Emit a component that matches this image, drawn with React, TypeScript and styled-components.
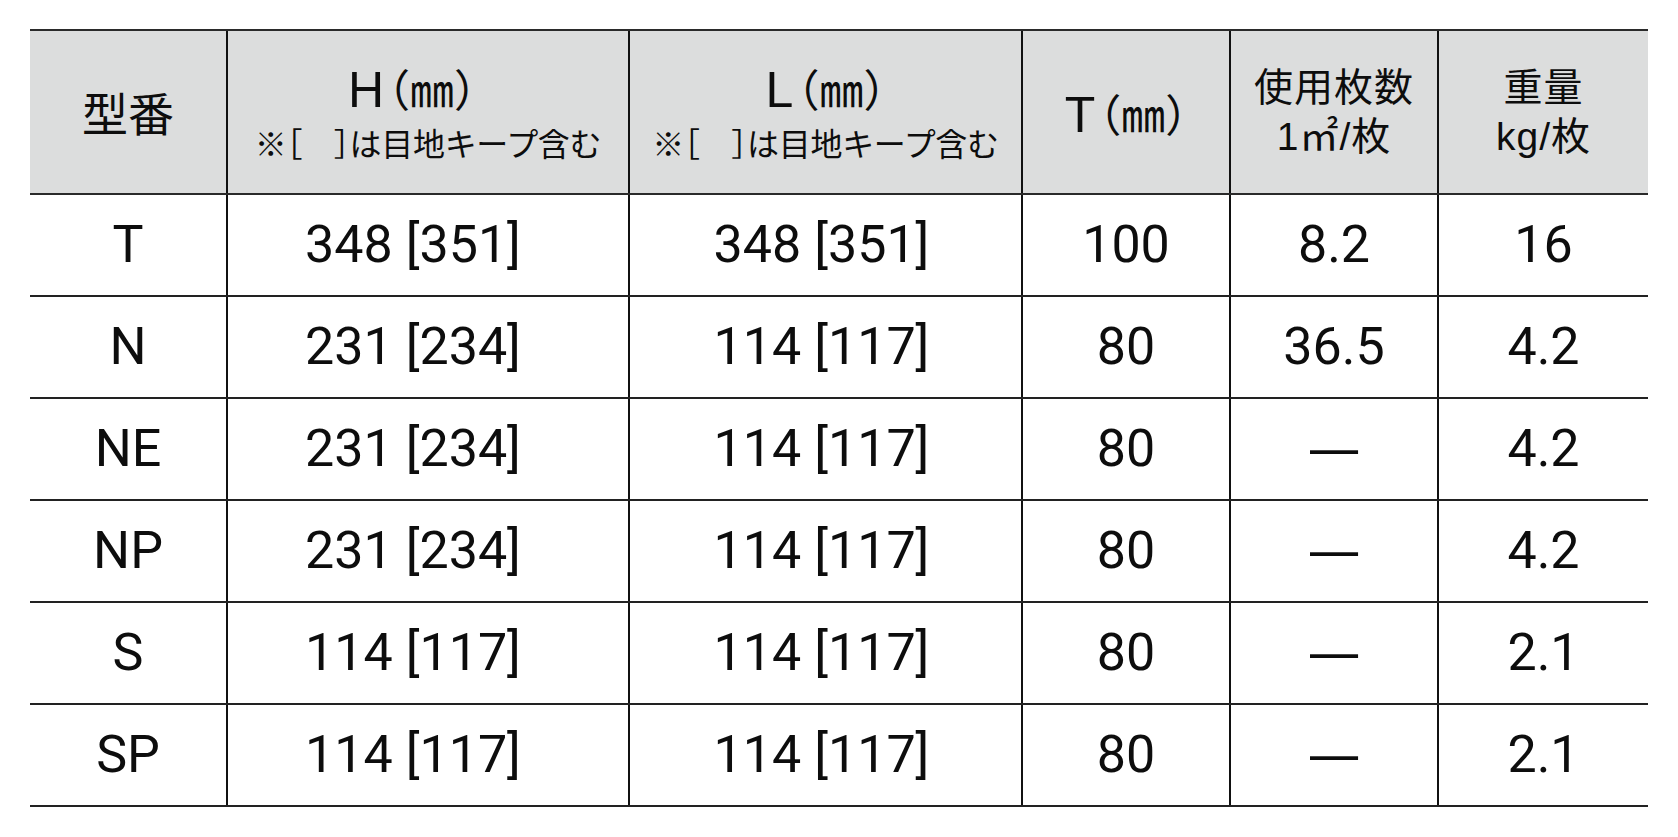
import React from "react";
import styled, { createGlobalStyle } from "styled-components";

const GlobalStyle = createGlobalStyle`
  html, body {
    margin: 0;
    padding: 0;
    background: #ffffff;
  }
`;

type Row = [string, string, string, string, string, string];

const COLUMNS = [197, 402, 393, 208, 208, 210];
// the H column sits a bit right-heavy in the source, so its values get pushed left
const RIGHT_PAD = [0, 30, 8, 0, 0, 0];

const ROWS: Row[] = [
  ["T", "348 [351]", "348 [351]", "100", "8.2", "16"],
  ["N", "231 [234]", "114 [117]", "80", "36.5", "4.2"],
  ["NE", "231 [234]", "114 [117]", "80", "—", "4.2"],
  ["NP", "231 [234]", "114 [117]", "80", "—", "4.2"],
  ["S", "114 [117]", "114 [117]", "80", "—", "2.1"],
  ["SP", "114 [117]", "114 [117]", "80", "—", "2.1"],
];

export default function App() {
  return (
    <Page>
      <GlobalStyle />
      <SpecTable>
        <colgroup>
          {COLUMNS.map((w, i) => (
            <col key={i} style={{ width: w }} />
          ))}
        </colgroup>
        <thead>
          <HeadRow>
            <HeadCell>
              <ModelLabel>型番</ModelLabel>
            </HeadCell>
            <HeadCell>
              <HeadMain $padRight={32}>
                H<Unit>（㎜）</Unit>
              </HeadMain>
              <HeadNote>※［　］は目地キープ含む</HeadNote>
            </HeadCell>
            <HeadCell>
              <HeadMain>
                L<Unit>（㎜）</Unit>
              </HeadMain>
              <HeadNote>※［　］は目地キープ含む</HeadNote>
            </HeadCell>
            <HeadCell>
              <HeadMain $single>
                T<Unit>（㎜）</Unit>
              </HeadMain>
            </HeadCell>
            <HeadCell>
              <HeadStack>使用枚数</HeadStack>
              <HeadStack>1㎡/枚</HeadStack>
            </HeadCell>
            <HeadCell>
              <HeadStack>重量</HeadStack>
              <HeadStack>kg/枚</HeadStack>
            </HeadCell>
          </HeadRow>
        </thead>
        <tbody>
          {ROWS.map((row) => (
            <BodyRow key={row[0]}>
              {row.map((value, i) => (
                <BodyCell key={i} $padRight={RIGHT_PAD[i]}>
                  {value === "—" ? <Dash>—</Dash> : value}
                </BodyCell>
              ))}
            </BodyRow>
          ))}
        </tbody>
      </SpecTable>
    </Page>
  );
}

const Page = styled.div`
  padding: 29px 30px 0 30px;
  width: 1678px;
  box-sizing: border-box;
`;

const SpecTable = styled.table`
  border-collapse: collapse;
  table-layout: fixed;
  width: 1618px;
  color: #0d0d0d;
`;

const HeadRow = styled.tr`
  height: 164px;
  background: #dcdddd;
`;

const HeadCell = styled.th`
  padding: 0;
  font-weight: 400;
  text-align: center;
  vertical-align: middle;
  border-top: 2px solid #2a2a2a;
  border-bottom: 2px solid #2a2a2a;
  border-left: 2px solid #111111;
  font-family: "Liberation Sans", "Noto Sans CJK JP", sans-serif;

  &:first-child {
    border-left: none;
  }
`;

const ModelLabel = styled.div`
  font-family: "Noto Sans CJK JP", sans-serif;
  font-size: 46px;
  line-height: 52px;
  margin-top: -2px;
`;

const HeadMain = styled.div<{ $single?: boolean; $padRight?: number }>`
  font-size: 50px;
  line-height: 54px;
  margin-top: ${(p) => (p.$single ? "4px" : "-2px")};
  padding-right: ${(p) => p.$padRight ?? 0}px;
`;

const Unit = styled.span`
  font-family: "Noto Sans CJK JP", sans-serif;
  font-size: 44px;
  font-feature-settings: "halt";
  margin-left: 4px;
`;

const HeadNote = styled.div`
  font-family: "Noto Sans CJK JP", sans-serif;
  font-size: 32px;
  line-height: 40px;
  margin-top: 5px;
  font-feature-settings: "halt";
  letter-spacing: -0.3px;
`;

const HeadStack = styled.div`
  font-family: "Liberation Sans", "Noto Sans CJK JP", sans-serif;
  font-size: 39px;
  line-height: 49px;
  letter-spacing: 1px;
`;

const BodyRow = styled.tr`
  height: 102px;
`;

const BodyCell = styled.td<{ $padRight: number }>`
  padding: 0 ${(p) => p.$padRight}px 0 0;
  text-align: center;
  vertical-align: middle;
  font-family: Roboto, "Liberation Sans", sans-serif;
  font-size: 52px;
  line-height: 60px;
  border-bottom: 2px solid #222222;
  border-left: 2px solid #111111;

  &:first-child {
    border-left: none;
  }
`;

const Dash = styled.span`
  font-family: "Noto Sans CJK JP", sans-serif;
  font-size: 60px;
  vertical-align: 4px;
`;
